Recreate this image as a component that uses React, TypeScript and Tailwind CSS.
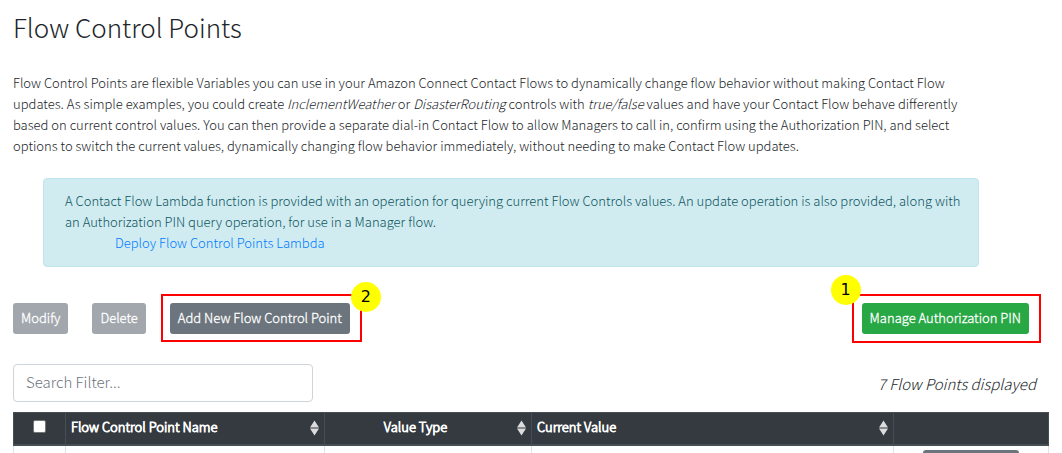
import type { ReactNode } from "react";

const columns = [
  { label: "Flow Control Point Name", width: "w-[259px]", align: "text-left" },
  { label: "Value Type", width: "w-[207px]", align: "text-center" },
  { label: "Current Value", width: "w-[362px]", align: "text-left" },
];

function SortIcon() {
  return (
    <svg className="block h-4 w-[9px] shrink-0" viewBox="0 0 9 16" aria-hidden="true">
      <path d="M4.5 0.5 L9 7.5 H0 Z M0 8.5 H9 L4.5 15.5 Z" fill="#dcdcdc" />
    </svg>
  );
}

function Callout({ step, side, children }: { step: number; side: "left" | "right"; children: ReactNode }) {
  const frame = side === "right" ? "-left-[9px] -right-3 -bottom-2" : "-left-2.5 -right-3 -bottom-[9px]";
  const badge = side === "right" ? "-right-[31px] -top-[21px]" : "-left-[31px] -top-7";
  return (
    <div className="relative">
      {children}
      <div className={`pointer-events-none absolute -top-[9px] border-2 border-[#f00] ${frame}`} />
      <span
        className={`absolute flex size-[30px] items-center justify-center rounded-full bg-[#ff0] font-['DejaVu_Sans',sans-serif] text-base font-normal leading-none text-black ${badge}`}
      >
        {step}
      </span>
    </div>
  );
}

const button =
  "block h-[31px] whitespace-nowrap rounded-[3px] px-2 pb-0.5 text-[13px] leading-[21px] text-white [-webkit-text-stroke:0.3px_white]";

export default function App() {
  return (
    <main className="h-screen overflow-hidden bg-white px-[13px] pt-2.5 font-['Noto_Sans_CJK_JP',sans-serif] text-[13px] font-light leading-[21px] text-[#212529]">
      <h1 className="text-[26px] leading-[34px]">Flow Control Points</h1>
      <p className="mt-7 pr-[90px]">
        Flow Control Points are flexible Variables you can use in your Amazon Connect Contact Flows to dynamically
        change flow behavior without making Contact Flow updates. As simple examples, you could create{" "}
        <em>InclementWeather</em> or <em>DisasterRouting</em> controls with <em>true/false</em> values and have your
        Contact Flow behave differently based on current control values. You can then provide a separate dial-in
        Contact Flow to allow Managers to call in, confirm using the Authorization PIN, and select options to switch
        the current values, dynamically changing flow behavior immediately, without needing to make Contact Flow
        updates.
      </p>

      <div className="ml-[30px] mr-[70px] mt-[22px] rounded border border-[#bee5eb] bg-[#d1ecf1] pb-[13px] pl-[21px] pr-3 pt-[11px] text-[#0c5460]">
        <p>
          A Contact Flow Lambda function is provided with an operation for querying current Flow Controls values. An
          update operation is also provided, along with an Authorization PIN query operation, for use in a Manager
          flow.
        </p>
        <a href="#deploy" className="ml-[50px] text-[#007bff]">
          Deploy Flow Control Points Lambda
        </a>
      </div>

      <div className="mt-9 flex items-center justify-between pr-5">
        <div className="flex gap-6">
          <button type="button" disabled className={`${button} bg-[#a2a7ad]`}>
            Modify
          </button>
          <button type="button" disabled className={`${button} bg-[#a2a7ad]`}>
            Delete
          </button>
          <Callout step={2} side="right">
            <button type="button" className={`${button} bg-[#6c757d]`}>
              Add New Flow Control Point
            </button>
          </Callout>
        </div>
        <Callout step={1} side="left">
          <button type="button" className={`${button} bg-[#28a745]`}>
            Manage Authorization PIN
          </button>
        </Callout>
      </div>

      <div className="mt-[30px] flex items-center justify-between pr-[13px] text-[15px]">
        <input
          type="text"
          aria-label="Search Filter"
          placeholder="Search Filter..."
          className="h-[38px] w-[300px] rounded border border-[#ced4da] px-3 pb-1 placeholder:text-[#6c757d]"
        />
        <em>7 Flow Points displayed</em>
      </div>

      <table className="mt-2.5 w-full table-fixed border-collapse">
        <thead>
          <tr className="h-8 bg-[#343a40] text-white [-webkit-text-stroke:0.8px_white]">
            <th className="w-[52px] border border-b-2 border-[#454d55] p-0">
              <input
                type="checkbox"
                aria-label="Select all"
                className="mx-auto mb-1 block size-[13px] appearance-none rounded-[2px] border border-[#767676] bg-white"
              />
            </th>
            {columns.map((c) => (
              <th
                key={c.label}
                className={`border border-b-2 border-[#454d55] px-[5px] py-0 font-light ${c.width} ${c.align}`}
              >
                <div className="flex items-center">
                  <span className="flex-1 pb-[3px] pr-4">{c.label}</span>
                  <SortIcon />
                </div>
              </th>
            ))}
            <th className="border border-b-2 border-[#454d55] p-0" aria-label="Actions" />
          </tr>
        </thead>
        <tbody>
          <tr>
            <td className="border border-[#dee2e6]" />
            <td className="border border-[#dee2e6]" />
            <td className="border border-[#dee2e6]" />
            <td className="border border-[#dee2e6]" />
            <td className="border border-[#dee2e6] px-[29px] py-1">
              <button type="button" aria-label="Change value" className={`${button} w-full bg-[#6c757d]`} />
            </td>
          </tr>
        </tbody>
      </table>
    </main>
  );
}
